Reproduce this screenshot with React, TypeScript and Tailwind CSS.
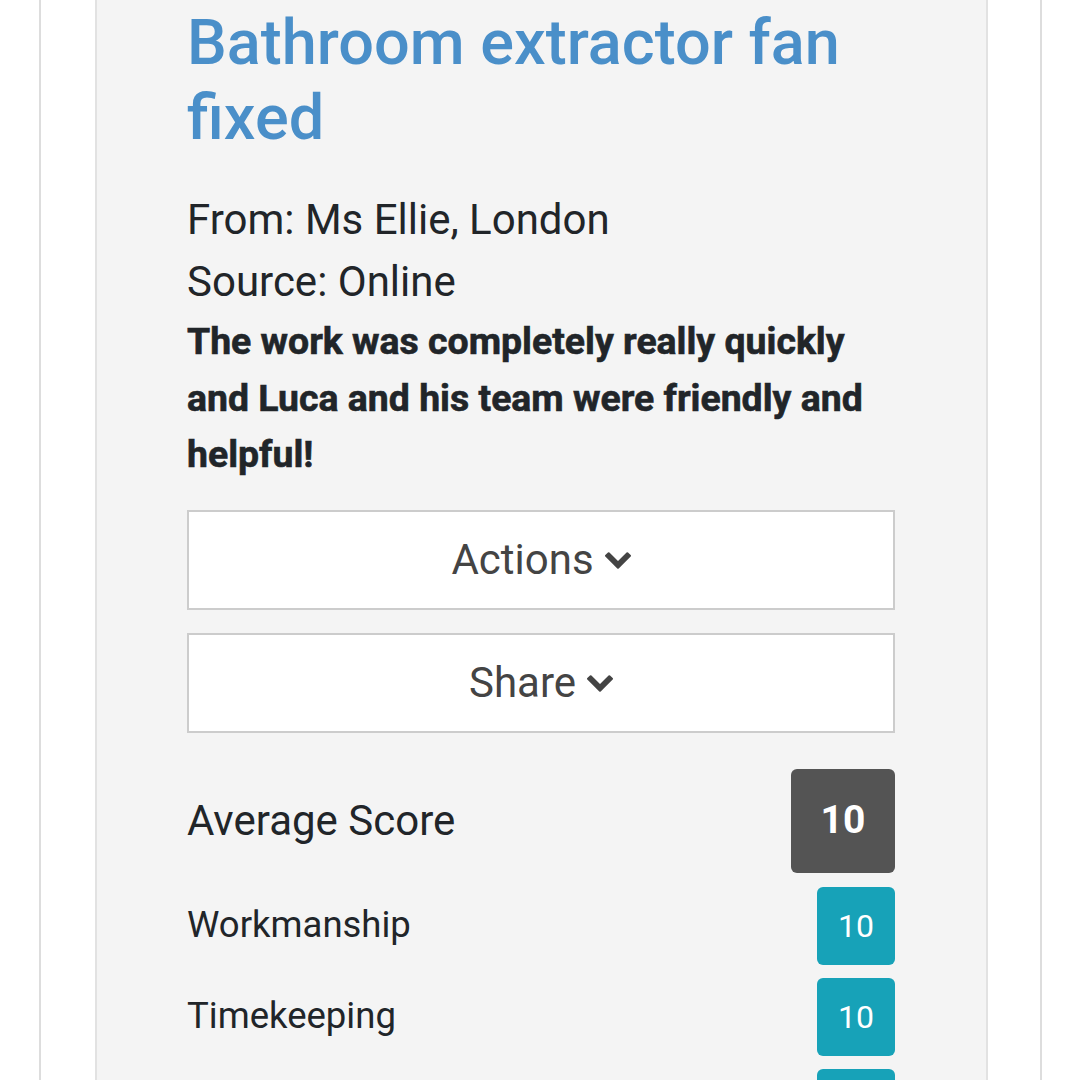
import React from "react";

function Chevron() {
  return (
    <svg viewBox="90 533 1612 1035" className="w-[26px] h-[17px] fill-[#444444] ml-[11px] mt-[2px]">
      <path d="M1683 808l-742 741q-19 19-45 19t-45-19l-742-741q-19-19-19-45.5t19-45.5l166-165q19-19 45-19t45 19l531 531 531-531q19-19 45-19t45 19l166 165q19 19 19 45.5t-19 45.5z" />
    </svg>
  );
}

function Btn({ label }: { label: string }) {
  return (
    <div className="h-[100px] border-2 border-[#cccccc] bg-white flex items-center justify-center text-[42px] text-[#444444]">
      <span>{label}</span>
      <Chevron />
    </div>
  );
}

function ScoreRow({ label }: { label: string }) {
  return (
    <div className="flex items-center justify-between">
      <span className="text-[36.5px] text-[#212529]">{label}</span>
      <div className="w-[78px] h-[78px] rounded-[6px] bg-[#17a2b8] text-white text-[32px] flex items-center justify-center">
        10
      </div>
    </div>
  );
}

export default function App() {
  return (
    <div className="w-[1080px] h-[1080px] overflow-hidden bg-white" style={{ fontFamily: "Roboto, sans-serif" }}>
      <div className="ml-[39px] w-[1003px] h-full border-x-2 border-[#dddddd] pl-[54px] pr-[52px]">
        <div className="h-full border-x-2 border-[#e2e2e2] bg-[#f4f4f4] pl-[90px] pr-[91px] pt-[5px]">
          <h1 className="text-[63px] leading-[75px] font-medium text-[#4a8fc9]">
            Bathroom extractor fan fixed
          </h1>
          <div className="mt-[34px] text-[42px] leading-[62px] text-[#212529]">
            <p>From: Ms Ellie, London</p>
            <p>Source: Online</p>
          </div>
          <p className="text-[37.4px] leading-[56.5px] font-bold text-[#212529] [-webkit-text-stroke:0.6px_#212529]">
            The work was completely really quickly and Luca and his team were friendly and helpful!
          </p>
          <div className="mt-[27px] flex flex-col gap-[23px]">
            <Btn label="Actions" />
            <Btn label="Share" />
          </div>
          <div className="mt-[36px] flex items-center justify-between">
            <span className="text-[42px] text-[#212529]">Average Score</span>
            <div className="w-[104px] h-[104px] rounded-[6px] bg-[#545454] text-white text-[39px] font-bold flex items-center justify-center">
              10
            </div>
          </div>
          <div className="mt-[14px] flex flex-col gap-[13px]">
            <ScoreRow label="Workmanship" />
            <ScoreRow label="Timekeeping" />
            <div className="flex justify-end">
              <div className="w-[78px] h-[78px] rounded-[6px] bg-[#17a2b8]" />
            </div>
          </div>
        </div>
      </div>
    </div>
  );
}
